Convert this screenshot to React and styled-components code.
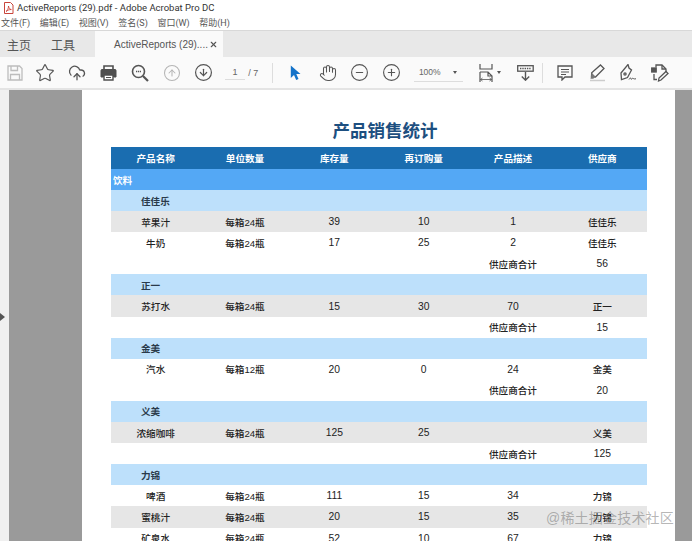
import React from 'react'
import styled, { createGlobalStyle } from 'styled-components'
import {
	ArrowDownCircle,
	ArrowUpCircle,
	CloudUpload,
	Hand,
	MinusCircle,
	PlusCircle,
	Star,
	X,
} from 'lucide-react'

const menus = ['文件(F)', '编辑(E)', '视图(V)', '签名(S)', '窗口(W)', '帮助(H)']

const headers = ['产品名称', '单位数量', '库存量', '再订购量', '产品描述', '供应商']

// shadeFrom: index of the first grey row in the group
const suppliers = [
	{
		name: '佳佳乐',
		total: 56,
		shadeFrom: 0,
		rows: [
			['苹果汁', '每箱24瓶', '39', '10', '1'],
			['牛奶', '每箱24瓶', '17', '25', '2'],
		],
	},
	{ name: '正一', total: 15, shadeFrom: 0, rows: [['苏打水', '每箱24瓶', '15', '30', '70']] },
	{ name: '金美', total: 20, shadeFrom: 1, rows: [['汽水', '每箱12瓶', '20', '0', '24']] },
	{ name: '义美', total: 125, shadeFrom: 0, rows: [['浓缩咖啡', '每箱24瓶', '125', '25', '']] },
	{
		name: '力锦',
		shadeFrom: 1,
		rows: [
			['啤酒', '每箱24瓶', '111', '15', '34'],
			['蜜桃汁', '每箱24瓶', '20', '15', '35'],
			['矿泉水', '每箱24瓶', '52', '10', '67'],
		],
	},
]

const PdfIcon = () => (
	<svg width='11' height='12' viewBox='0 0 11 12'>
		<path d='M1.500.5h6l2.500 2.500v8.500H1.500z' fill='#fff' stroke='#c8443b' strokeWidth='1' />
		<path d='M3 9.500c1.500-1 2.500-3 2.500-5.500.3 2 1.200 3.200 2.800 3.500-2 0-3.800.8-5.300 2z' fill='none' stroke='#c8332b' strokeWidth='.8' />
	</svg>
)

const SaveIcon = () => (
	<svg width='16' height='16' viewBox='0 0 16 16' fill='none' stroke='#bdbdbd' strokeWidth='1.300'>
		<path d='M1 1h11.500L15 3.500V15H1z' />
		<path d='M4 1v4.500h6.500V1M3.500 15V9.500h9V15' />
	</svg>
)

const PrinterIcon = () => (
	<svg width='17' height='16' viewBox='0 0 17 16'>
		<path d='M4 5V1h9v4' fill='none' stroke='#4f4f4f' strokeWidth='1.600' />
		<path d='M1 5.500a1 1 0 0 1 1-1h13a1 1 0 0 1 1 1V12h-2.500V9.500h-10V12H1z' fill='#4f4f4f' stroke='#4f4f4f' />
		<path d='M4 10h9v5H4z' fill='#fff' stroke='#4f4f4f' strokeWidth='1.400' />
		<path d='M6 12.500h5' stroke='#4f4f4f' />
	</svg>
)

const FindIcon = () => (
	<svg width='18' height='18' viewBox='0 0 18 18' fill='none' stroke='#555'>
		<circle cx='7.500' cy='7.500' r='6' strokeWidth='1.600' />
		<path d='M12 12l5 5' strokeWidth='2.200' />
		<path d='M5 7.500h5' strokeWidth='1.300' strokeDasharray='1.200 .7' />
	</svg>
)

const ArrowCursor = () => (
	<svg width='11' height='16' viewBox='0 0 11 16'>
		<path d='M.8.500v12.500l3.200-3 2.200 5 2.300-1-2.200-4.900 4.200-.2z' fill='#1473c9' />
	</svg>
)

const FitIcon = () => (
	<svg width='14' height='18' viewBox='0 0 14 18' fill='none' stroke='#555' strokeWidth='1.200'>
		<path d='M1 0v5h12V0' />
		<path d='M1 8v10M1 8h8l4 4v6M9 8v4h4' />
		<path d='M1.500 15.500h11M3.500 14l-2 1.500 2 1.500M10.500 14l2 1.500-2 1.500' strokeWidth='.8' />
	</svg>
)

const ScrollIcon = () => (
	<svg width='17' height='16' viewBox='0 0 17 16' fill='none' stroke='#555' strokeWidth='1.300'>
		<rect x='.700' y='.700' width='15.500' height='5.500' />
		<path d='M3 3.500h11' strokeDasharray='1.400 .9' strokeWidth='1.600' />
		<path d='M8.500 7v8M4.800 11.500l3.700 3.700 3.700-3.700' strokeWidth='1.400' />
	</svg>
)

const CommentIcon = () => (
	<svg width='16' height='16' viewBox='0 0 16 16' fill='none' stroke='#555' strokeWidth='1.300'>
		<path d='M1 1h14v11H8l-3 3v-3H1z' />
		<path d='M4 4.500h8M4 7h8M4 9.500h5' strokeWidth='1' />
	</svg>
)

const HighlightIcon = () => (
	<svg width='17' height='18' viewBox='0 0 17 18' fill='none'>
		<path d='M11.500 1l3.500 3.500-8.500 8.500-4-.5.200-3.700z' stroke='#555' strokeWidth='1.300' />
		<path d='M2.700 8.800l4 4-2.500 2H1.500z' fill='#777' />
		<path d='M1 16.500h15' stroke='#ccc' strokeWidth='1.500' />
	</svg>
)

const SignIcon = () => (
	<svg width='17' height='17' viewBox='0 0 17 17' fill='none' stroke='#555' strokeWidth='1.300'>
		<path d='M8 .5l1 3.500 2.500 2-4 7.500L1.500 15.500 1 9z' />
		<circle cx='5' cy='10' r='1.100' />
		<path d='M9 15.500c1-1.800 1.800-2 1.800-1s1 1 1.500 0 1 1 3.700.3' strokeWidth='1' />
	</svg>
)

const EditIcon = () => (
	<svg width='18' height='18' viewBox='0 0 18 18' fill='none' stroke='#555' strokeWidth='1.300'>
		<rect x='.700' y='4' width='4.500' height='4' fill='#555' />
		<path d='M5 3.500V1h6l4 4v3M3 10v5.500h3' />
		<path d='M11 1v4h4' />
		<path d='M7.500 17l.5-3 7-6.500 2 2-7 6.500z' />
	</svg>
)

const GlobalStyle = createGlobalStyle`
	html, body {
		margin: 0;
		padding: 0;
		background: #fff;
	}
	body {
		font-family: 'Liberation Sans', 'Noto Sans CJK SC', sans-serif;
	}
`

const App = () => (
	<>
		<GlobalStyle />
		<Window>
			<TitleBar>
				<PdfIcon />
				<span>ActiveReports (29).pdf - Adobe Acrobat Pro DC</span>
			</TitleBar>
			<MenuBar>
				{menus.map(item => (
					<span key={item}>{item}</span>
				))}
			</MenuBar>
			<TabBar>
				<NavTab>主页</NavTab>
				<NavTab>工具</NavTab>
				<DocTab>
					<span>ActiveReports (29)....</span>
					<X size={9} strokeWidth={3} color='#555' />
				</DocTab>
			</TabBar>
			<Toolbar>
				<SaveSlot>
					<SaveIcon />
				</SaveSlot>
				<Tool><Star size={20} strokeWidth={1.4} /></Tool>
				<Tool><CloudUpload size={18} strokeWidth={1.7} /></Tool>
				<Tool><PrinterIcon /></Tool>
				<Tool><FindIcon /></Tool>
				<Tool $muted><ArrowUpCircle size={18} strokeWidth={1.4} /></Tool>
				<Tool><ArrowDownCircle size={19} strokeWidth={1.5} /></Tool>
				<PageField>
					<PageInput>1</PageInput>
					<span>/ 7</span>
				</PageField>
				<Divider />
				<Tool><ArrowCursor /></Tool>
				<Tool><Hand size={18} strokeWidth={1.4} /></Tool>
				<Tool><MinusCircle size={19} strokeWidth={1.4} /></Tool>
				<Tool><PlusCircle size={19} strokeWidth={1.4} /></Tool>
				<ZoomField>
					<span>100%</span>
					<Caret />
				</ZoomField>
				<FitSlot>
					<FitIcon />
					<Caret />
				</FitSlot>
				<Tool><ScrollIcon /></Tool>
				<Divider />
				<Tool><CommentIcon /></Tool>
				<Tool><HighlightIcon /></Tool>
				<Tool><SignIcon /></Tool>
				<Tool><EditIcon /></Tool>
			</Toolbar>
			<Viewer>
				<SideStrip>
					<SideArrow />
				</SideStrip>
				<Canvas>
					<Page>
						<ReportTitle>产品销售统计</ReportTitle>
						<Table>
							<HeaderRow>
								{headers.map(h => (
									<Cell key={h} $label>{h}</Cell>
								))}
							</HeaderRow>
							<CategoryRow>饮料</CategoryRow>
							{suppliers.map(s => (
								<React.Fragment key={s.name}>
									<SupplierRow>{s.name}</SupplierRow>
									{s.rows.map((row, index) => (
										<Row key={row[0]} $striped={index % 2 === s.shadeFrom}>
											{row.map((value, i) => (
												<Cell key={i} $label={i < 2}>{value}</Cell>
											))}
											<Cell $label>{s.name}</Cell>
										</Row>
									))}
									{s.total && (
										<Row>
											<Cell />
											<Cell />
											<Cell />
											<Cell />
											<Cell $label>供应商合计</Cell>
											<Cell>{s.total}</Cell>
										</Row>
									)}
								</React.Fragment>
							))}
						</Table>
					</Page>
				</Canvas>
			</Viewer>
			<Watermark>@稀土掘金技术社区</Watermark>
		</Window>
	</>
)

const Window = styled.div`
	position: relative;
	width: 692px;
	height: 541px;
	overflow: hidden;
	display: flex;
	flex-direction: column;
	background: #fff;
`

const TitleBar = styled.div`
	height: 15px;
	display: flex;
	align-items: center;
	gap: 3px;
	padding-left: 3px;
	font-family: Roboto, sans-serif;
	font-size: 9.500px;
	color: #333;
`

const MenuBar = styled.div`
	height: 15px;
	display: flex;
	align-items: center;
	gap: 9.600px;
	padding-left: 1px;
	font-family: Roboto, 'Noto Sans CJK SC', sans-serif;
	font-size: 9px;
	color: #555;
`

const TabBar = styled.div`
	height: 26px;
	display: flex;
	align-items: stretch;
	gap: 20px;
	padding-left: 7px;
	background: #e8e8e8;
	border-top: 1px solid #d8d8d8;
`

const NavTab = styled.div`
	display: flex;
	align-items: center;
	font-size: 12px;
	color: #555;
`

const DocTab = styled.div`
	width: 128px;
	box-sizing: border-box;
	display: flex;
	align-items: center;
	justify-content: space-between;
	padding: 0 5px 0 19px;
	background: #fafafa;
	font-size: 10px;
	color: #555;
`

const Toolbar = styled.div`
	height: 31px;
	display: flex;
	align-items: center;
	background: #fafafa;
	border-bottom: 2px solid #e4e4e4;
`

const SaveSlot = styled.div`
	width: 29px;
	flex: none;
	display: flex;
	justify-content: center;
`

const Tool = styled.div`
	width: 31.700px;
	flex: none;
	display: flex;
	justify-content: center;
	align-items: center;
	color: ${p => (p.$muted ? '#b5b5b5' : '#555')};
`

const PageField = styled.div`
	width: 53px;
	flex: none;
	display: flex;
	align-items: center;
	gap: 3px;
	padding-left: 6px;
	box-sizing: border-box;
	font-size: 9px;
	color: #666;
`

const PageInput = styled.span`
	width: 20px;
	line-height: 14px;
	text-align: center;
	border-bottom: 1px solid #ddd;
`

const Divider = styled.div`
	width: 1px;
	height: 20px;
	flex: none;
	background: #ddd;
	margin: 0 7px 0 0;
`

const ZoomField = styled.div`
	width: 49px;
	height: 18px;
	flex: none;
	box-sizing: border-box;
	display: flex;
	align-items: center;
	justify-content: space-between;
	margin: 0 16px 0 7px;
	padding: 0 6px 0 5px;
	border-bottom: 1px solid #ddd;
	font-size: 8.500px;
	color: #666;
`

const Caret = styled.i`
	width: 0;
	height: 0;
	border-left: 2.500px solid transparent;
	border-right: 2.500px solid transparent;
	border-top: 3px solid #555;
`

const FitSlot = styled.div`
	width: 31px;
	flex: none;
	display: flex;
	align-items: center;
	gap: 4px;
`

const Viewer = styled.div`
	flex: 1;
	min-height: 0;
	display: flex;
`

const SideStrip = styled.div`
	width: 9px;
	flex: none;
	display: flex;
	align-items: center;
	background: #f0f0f0;
`

const SideArrow = styled.i`
	width: 0;
	height: 0;
	margin-top: 2px;
	border-top: 4px solid transparent;
	border-bottom: 4px solid transparent;
	border-left: 5px solid #555;
`

const Canvas = styled.div`
	flex: 1;
	padding: 0 17px 0 73px;
	background: #9a9a9a;
`

const Page = styled.div`
	height: 100%;
	box-sizing: border-box;
	padding: 28px 28px 0 29px;
	background: #fff;
`

const ReportTitle = styled.div`
	height: 29px;
	padding-left: 12px;
	line-height: 26px;
	text-align: center;
	font-size: 17.500px;
	font-weight: 700;
	color: #1d4f80;
`

const Table = styled.div`
	display: flex;
	flex-direction: column;
	font-size: 9.600px;
	color: #222;
`

const Row = styled.div`
	height: 21.100px;
	display: grid;
	grid-template-columns: repeat(6, 1fr);
	align-items: center;
	text-align: center;
	background: ${p => (p.$striped ? '#e6e6e6' : '#fff')};
`

const HeaderRow = styled(Row)`
	height: 22px;
	padding-bottom: 1px;
	box-sizing: border-box;
	background: #1a6db0;
	color: #fff;
	font-weight: 700;
`

const CategoryRow = styled.div`
	height: 21px;
	display: flex;
	align-items: center;
	padding-left: 2px;
	background: #54a8f5;
	color: #fff;
	font-weight: 700;
`

const SupplierRow = styled.div`
	height: 21.100px;
	display: flex;
	align-items: center;
	padding-left: 30px;
	background: #bde0fb;
	color: #2a3a4a;
	font-weight: 700;
`

const Cell = styled.span`
	font-size: ${p => (p.$label ? 'inherit' : '10.300px')};
	font-weight: ${p => (p.$label ? 500 : 'inherit')};
	white-space: nowrap;
	${HeaderRow} & {
		font-weight: 700;
	}
`

const Watermark = styled.div`
	position: absolute;
	left: 546px;
	top: 507px;
	font-size: 14px;
	letter-spacing: .2px;
	color: rgba(120, 120, 120, .55);
	white-space: nowrap;
`

export default App
